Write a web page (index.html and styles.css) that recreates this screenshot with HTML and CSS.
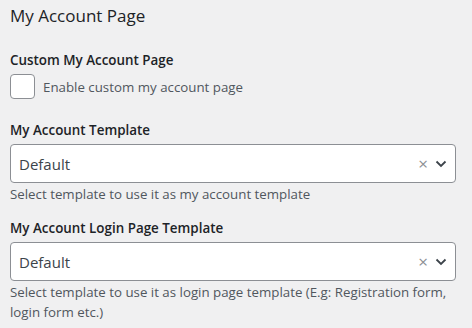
FILE: index.html
```html
<!DOCTYPE html>
<html lang="en">
<head>
    <meta charset="UTF-8">
    <meta name="viewport" content="width=device-width, initial-scale=1.0">
    <title>My Account Page</title>
    <link rel="stylesheet" href="styles.css">
</head>
<body>
    <div class="panel">
        <h2 class="panel-title">My Account Page</h2>

        <div class="field field-check">
            <div class="field-label">Custom My Account Page</div>
            <label class="check-row">
                <span class="checkbox"></span>
                <span>Enable custom my account page</span>
            </label>
        </div>

        <div class="field">
            <div class="field-label">My Account Template</div>
            <div class="select">
                <span class="select-value">Default</span>
                <span class="select-clear">&times;</span>
                <svg class="select-arrow" width="12" height="8" viewBox="0 0 12 8"><path d="M1.5 1.5 L6 6 L10.5 1.5" fill="none" stroke="#3c434a" stroke-width="1.8"/></svg>
            </div>
            <p class="help">Select template to use it as my account template</p>
        </div>

        <div class="field">
            <div class="field-label">My Account Login Page Template</div>
            <div class="select">
                <span class="select-value">Default</span>
                <span class="select-clear">&times;</span>
                <svg class="select-arrow" width="12" height="8" viewBox="0 0 12 8"><path d="M1.5 1.5 L6 6 L10.5 1.5" fill="none" stroke="#3c434a" stroke-width="1.8"/></svg>
            </div>
            <p class="help">Select template to use it as login page template (E.g: Registration form, login form etc.)</p>
        </div>
    </div>
</body>
</html>
```

FILE: styles.css
```css
:root {
    --bg-color: #f0f0f1;
    --text-color: #1d2327;
    --muted: #50575e;
    --border: #8c8f94;
    --white: #ffffff;
}

* {
    margin: 0;
    padding: 0;
    box-sizing: border-box;
}

body {
    background: var(--bg-color);
    color: var(--text-color);
    font-family: 'Open Sans', 'Noto Sans', sans-serif;
    margin: 0;
}

.panel {
    padding: 4px 16px 0 10px;
}

.panel-title {
    font-size: 17px;
    font-weight: 400;
    line-height: 24px;
    margin-bottom: 22px;
}

.field {
    margin-bottom: 14px;
}

.field-check {
    margin-bottom: 21px;
}

.field-label {
    font-size: 13.4px;
    font-weight: 600;
    line-height: 20px;
    margin-bottom: 4px;
}

.check-row {
    display: flex;
    align-items: center;
    gap: 8px;
    font-size: 13.3px;
    color: var(--muted);
}

.checkbox {
    width: 25px;
    height: 25px;
    border: 1px solid var(--border);
    border-radius: 4px;
    background: var(--white);
}

.select {
    display: flex;
    align-items: center;
    height: 39px;
    padding: 0 8px 0 8px;
    background: var(--white);
    border: 1px solid var(--border);
    border-radius: 4px;
}

.select-value {
    flex: 1;
    font-size: 15px;
    color: #3c434a;
}

.select-clear {
    color: #8c8f94;
    font-size: 17px;
    margin-right: 7px;
}

.help {
    font-size: 13.3px;
    line-height: 20px;
    color: var(--muted);
    margin-top: 1px;
}
```
